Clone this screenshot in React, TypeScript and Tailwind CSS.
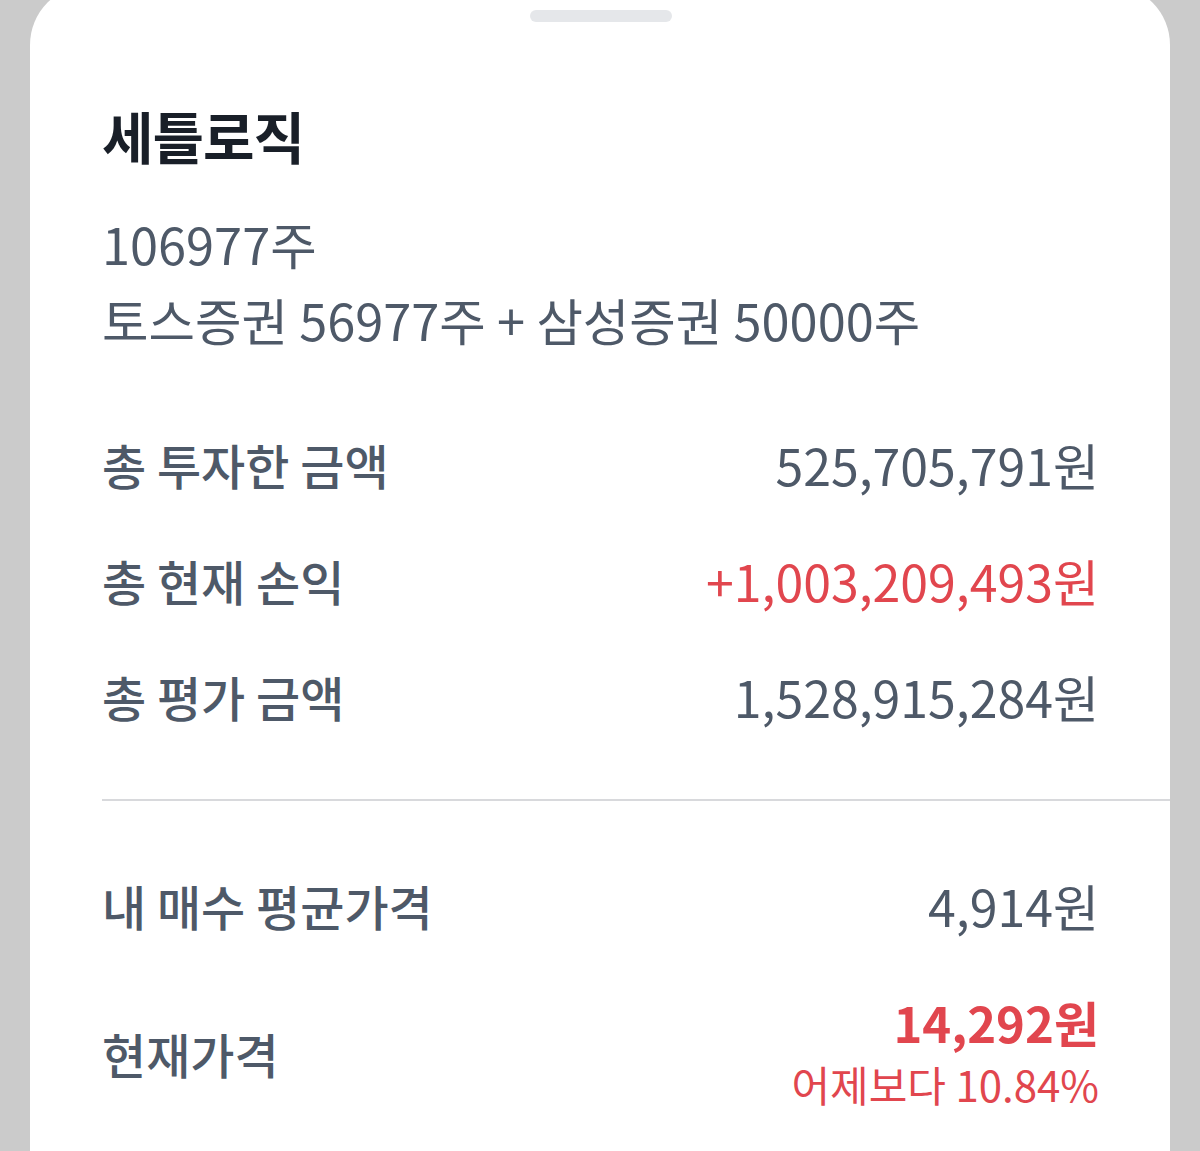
import React from 'react';

const font = { fontFamily: '"Noto Sans CJK KR", "Noto Sans", sans-serif' };

interface RowProps {
  label: string;
  value: string;
  red?: boolean;
}

const Row: React.FC<RowProps> = ({ label, value, red }) => (
  <div className="flex items-center justify-between h-[116px]">
    <span className="text-[48px] font-medium text-[#4e5968]">{label}</span>
    <span className={`text-[50px] ${red ? 'text-[#e1464e]' : 'text-[#4e5968]'}`}>{value}</span>
  </div>
);

export default function App() {
  return (
    <div className="h-[1151px] overflow-hidden bg-[#cbcbcb] px-[30px]" style={font}>
      <div className="mt-[-15px] h-[1200px] rounded-t-[60px] bg-white pl-[72px] pr-[71px]">
        {/* Handle */}
        <div className="flex justify-center pt-[25px]">
          <div className="h-[12px] w-[142px] rounded-full bg-[#e5e7ea]" />
        </div>

        {/* Header */}
        <h1 className="mt-[79px] text-[56px] font-bold leading-[1.2] tracking-[-1px] text-[#191f28]">
          세틀로직
        </h1>
        <div className="mt-[37px] text-[50.5px] leading-[76px] text-[#4e5968]">
          <p>106977주</p>
          <p>토스증권 56977주 + 삼성증권 50000주</p>
        </div>

        {/* Totals */}
        <div className="mt-[49px]">
          <Row label="총 투자한 금액" value="525,705,791원" />
          <Row label="총 현재 손익" value="+1,003,209,493원" red />
          <Row label="총 평가 금액" value="1,528,915,284원" />
        </div>

        <div className="mr-[-71px] mt-[45px] h-[2px] bg-[#d8d9dc]" />

        {/* Price */}
        <div className="mt-[46px]">
          <Row label="내 매수 평균가격" value="4,914원" />
          <div className="mt-[28px] flex items-center justify-between">
            <span className="text-[48px] font-medium text-[#4e5968]">현재가격</span>
            <div className="flex flex-col items-end">
              <span className="text-[49px] font-bold leading-[62px] text-[#e1464e]">14,292원</span>
              <span className="text-[42px] leading-[62px] text-[#e1464e]">어제보다 10.84%</span>
            </div>
          </div>
        </div>
      </div>
    </div>
  );
}
